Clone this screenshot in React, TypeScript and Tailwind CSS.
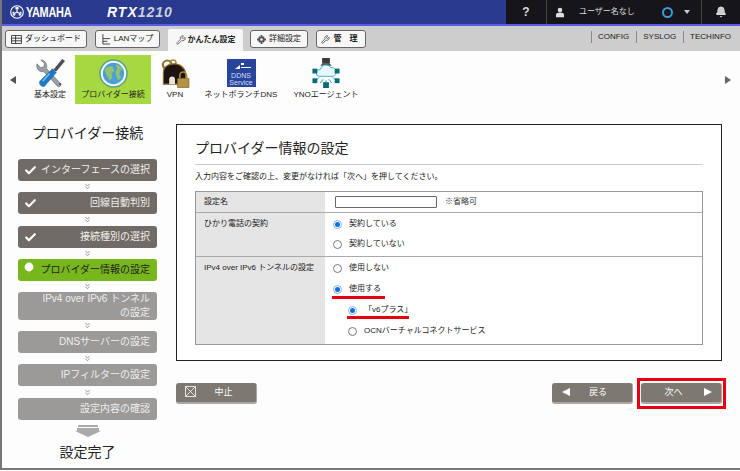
import { Bell, Check, ChevronsDown, Wrench } from "lucide-react";

const font = "[font-family:'Liberation_Sans','Noto_Sans_CJK_JP',sans-serif]";

const steps = [
  { label: "インターフェースの選択", state: "done" },
  { label: "回線自動判別", state: "done" },
  { label: "接続種別の選択", state: "done" },
  { label: "プロバイダー情報の設定", state: "active" },
  { label: "IPv4 over IPv6 トンネル\nの設定", state: "todo" },
  { label: "DNSサーバーの設定", state: "todo" },
  { label: "IPフィルターの設定", state: "todo" },
  { label: "設定内容の確認", state: "todo" },
];

const YamahaMark = () => (
  <svg viewBox="0 0 20 20" className="w-[14px] h-[14px]" fill="none" stroke="white">
    <circle cx="10" cy="10" r="9" strokeWidth="1.6" />
    <g strokeWidth="1.5">
      <path d="M10 10V3M8.5 3v3M11.5 3v3" />
      <path d="M10 10l6 3.5M16.5 11.5l-2.5-1.5M15 15l-2.5-1.5" />
      <path d="M10 10l-6 3.5M3.5 11.5l2.5-1.5M5 15l2.5-1.5" />
    </g>
  </svg>
);

const ToolsIcon = () => (
  <svg viewBox="0 0 30 30" className="w-[29px] h-[29px]">
    <path d="M5 1l4 4-1 3-3 1-4-4c-1 5 2 9 7 8l14 15c2 2 5-1 3-3L11 10c1-5-2-9-6-9z" fill="#9a9fa4" stroke="#5b5f64" strokeWidth="0.6" />
    <circle cx="25" cy="26" r="1.2" fill="#555" />
    <path d="M27 0l3 2-9 11-3-2z" fill="#4b4f55" />
    <path d="M17 10l4 4-12 14c-2 2-7-2-5-5z" fill="#1f78c4" stroke="#145a96" strokeWidth="0.5" />
    <path d="M7 23l7-8" stroke="#7cc0ee" strokeWidth="1.5" />
  </svg>
);

const GlobeIcon = () => (
  <svg viewBox="0 0 30 30" className="w-[29px] h-[29px]">
    <circle cx="15" cy="15" r="14" fill="#eef7f2" stroke="#5fa08c" strokeWidth="1.6" />
    <circle cx="15" cy="15" r="11" fill="#4a9fd6" />
    <path d="M6 11c3-3 6-4 8-3l2 4-3 3 1 5-3 2-3-5zM17 6c3 0 6 2 7 5l-2 1-1 4 2 3-3 3-2-4-1-5 2-3z" fill="#93c272" />
  </svg>
);

const VpnIcon = () => (
  <svg viewBox="0 0 30 30" className="w-[30px] h-[29px]">
    <circle cx="7" cy="6" r="4.5" fill="none" stroke="#8f7430" strokeWidth="2.2" />
    <circle cx="13" cy="4" r="3" fill="none" stroke="#a98c45" strokeWidth="1.6" />
    <path d="M3 26V14C3 8 8 5 14 5c7 0 12 5 12 11v10z" fill="#1c1512" stroke="#8d6f2e" strokeWidth="1.2" />
    <path d="M9 26v-5a3 3 0 016 0v5z" fill="#e9e4d8" />
    <path d="M20 20v-3a3.5 3.5 0 017 0v3" fill="none" stroke="#a98c45" strokeWidth="1.6" />
    <rect x="17.5" y="20" width="12" height="10" rx="1" fill="#b5924a" stroke="#7b6028" strokeWidth="0.6" />
  </svg>
);

const DnsIcon = () => (
  <div className="w-[29px] h-[28px] bg-[#28449c] flex flex-col items-center text-[#d8dff0]">
    <div className="h-[14px] w-full flex items-start pl-[8px] pt-[3px]">
      <svg viewBox="0 0 16 8" className="w-[16px] h-[8px]" fill="white">
        <path d="M0 7l5-4v4zM6 1h3v2H6zM6 5h10v1H6z" />
      </svg>
    </div>
    <span className="text-[7px] leading-[6px]">DDNS</span>
    <span className="text-[7px] leading-[7px]">Service</span>
  </div>
);

const YnoIcon = () => (
  <svg viewBox="0 0 30 31" className="w-[30px] h-[30px]">
    <rect x="11" y="0" width="8" height="6" fill="#3b3b3b" />
    <path d="M9 8l2-2h8l2 2z" fill="#555" />
    <path d="M15 8v3M15 23v3M8 17l-3-3M22 17l3-3M8 20l-3 3M22 20l3 3M12 22l-3 4M18 22l3 4" stroke="#1c8fa8" strokeWidth="0.9" />
    <path d="M8 19a3.5 3.5 0 011-7 6 6 0 0111-2 4.5 4.5 0 012 9z" fill="#e9f7fc" stroke="#3fb3d8" strokeWidth="1" />
    <g fill="#0f6a78">
      <rect x="1" y="11" width="5" height="5" />
      <rect x="24" y="11" width="5" height="5" />
      <rect x="1" y="21" width="5" height="5" />
      <rect x="24" y="21" width="5" height="5" />
      <rect x="12" y="25" width="6" height="6" />
    </g>
  </svg>
);

const navItems = [
  { label: "基本設定", icon: <ToolsIcon />, w: "w-[50px]" },
  { label: "プロバイダー接続", icon: <GlobeIcon />, w: "w-[76px]", active: true },
  { label: "VPN", icon: <VpnIcon />, w: "w-[48px]" },
  { label: "ネットボランチDNS", icon: <DnsIcon />, w: "w-[84px]" },
  { label: "YNOエージェント", icon: <YnoIcon />, w: "w-[86px]" },
];

const Radio = ({ on }: { on?: boolean }) => (
  <span className={`w-[9px] h-[9px] rounded-full border bg-white flex items-center justify-center shrink-0 ${on ? "border-[#8fb4e0]" : "border-[#777]"}`}>
    {on && <span className="w-[5px] h-[5px] rounded-full bg-[#0f6fe8]" />}
  </span>
);

const Option = ({ on, children, className = "" }: { on?: boolean; children: React.ReactNode; className?: string }) => (
  <div className={`flex items-center gap-[7px] h-[12px] ${className}`}>
    <Radio on={on} />
    <span>{children}</span>
  </div>
);

const TabButton = ({ children, className = "" }: { children: React.ReactNode; className?: string }) => (
  <div className={`h-[18px] bg-[#f7f7f7] border border-[#666] rounded-[3px] flex items-center justify-center gap-[3px] text-[8px] text-[#222] ${className}`}>
    {children}
  </div>
);

const ActionButton = ({ children, className = "" }: { children: React.ReactNode; className?: string }) => (
  <div className={`relative w-[81px] h-[21px] bg-[#7d7871] rounded-[3px] border-b-2 border-r border-[#aaa8a2] flex items-center text-[9px] text-white ${className}`}>
    {children}
  </div>
);

export default function App() {
  return (
    <div className={`${font} relative w-[740px] h-[470px] bg-[#fdfdfd] border-l-2 border-b-2 border-[#777] overflow-hidden text-[#222]`}>
      {/* top bar */}
      <header className="-ml-[2px] h-[24px] flex bg-[#2a3a8e]">
        <div className="flex-1 flex items-center pl-[10px]">
          <YamahaMark />
          <span className="ml-[2px] w-[60px] text-[14px] font-bold text-white [transform:scaleX(0.78)] origin-left tracking-tight">YAMAHA</span>
          <span className="ml-[21px] text-[14px] font-bold italic text-white tracking-[1px]">RTX<span className="text-[#c9d0dc]">1210</span></span>
        </div>
        <div className="w-[234px] bg-[#16161a] flex items-center text-[#ddd]">
          <div className="w-[41px] h-full border-r border-[#444] flex items-center justify-center text-[12px] font-bold">?</div>
          <div className="w-[155px] h-full border-r border-[#444] flex items-center pl-[9px] text-[8px]">
            <svg viewBox="0 0 10 12" className="w-[8px] h-[11px]" fill="#ddd">
              <circle cx="5" cy="3" r="2.8" />
              <path d="M0 12V8.5C0 7 2 6 5 6s5 1 5 2.5V12z" />
            </svg>
            <span className="ml-[15px] w-[74px] whitespace-nowrap">ユーザー名なし</span>
            <span className="ml-[9px] w-[11px] h-[11px] rounded-full border-2 border-[#3d9bd6]" />
            <span className="ml-[11px] w-0 h-0 border-l-[3px] border-r-[3px] border-t-[4px] border-l-transparent border-r-transparent border-t-[#ccc]" />
          </div>
          <div className="flex-1 flex items-center justify-center">
            <Bell className="w-[12px] h-[12px]" fill="#ccc" />
          </div>
        </div>
      </header>
      <div className="-ml-[2px] h-[2px] bg-[#5a5ae6]" />

      {/* tabs */}
      <div className="-ml-[2px] h-[25px] bg-[#cdcdcd] flex items-start pl-[5px] pt-[4px]">
        <TabButton className="w-[82px]">
          <svg viewBox="0 0 12 10" className="w-[11px] h-[9px]" fill="none" stroke="#333">
            <path d="M.5.5h11v9H.5zM5 .5v9M5 3.5h6.5M5 6.5h6.5M.5 3.5H5M.5 6.5H5" />
          </svg>
          ダッシュボード
        </TabButton>
        <TabButton className="w-[65px] ml-[8px]">
          <svg viewBox="0 0 10 12" className="w-[9px] h-[11px]" fill="none" stroke="#333">
            <path d="M1 0v11h8M1 5h8M1 8h5" />
          </svg>
          LANマップ
        </TabButton>
        <div className="w-[75px] h-[22px] -mt-[1px] ml-[8px] bg-[#f7f7f7] rounded-t-[2px] flex items-center justify-center gap-[2px] text-[8px] font-bold">
          <Wrench className="w-[10px] h-[10px] text-[#555]" />
          かんたん設定
        </div>
        <TabButton className="w-[58px] ml-[7px]">
          <svg viewBox="0 0 10 10" className="w-[9px] h-[9px]" fill="#555">
            <circle cx="5" cy="5" r="3.4" />
            <path d="M4 0h2v10H4zM0 4h10v2H0zM1.5 2.9l1.4-1.4 5.6 5.6-1.4 1.4zM7.1 1.5l1.4 1.4-5.6 5.6-1.4-1.4z" />
            <circle cx="5" cy="5" r="1.4" fill="#f7f7f7" />
          </svg>
          詳細設定
        </TabButton>
        <TabButton className="w-[50px] ml-[8px] font-bold">
          <Wrench className="w-[9px] h-[9px] text-[#444]" />
          <span className="tracking-[3px]">管 理</span>
        </TabButton>
        <div className="ml-auto mr-[9px] mt-[1px] h-[12px] flex items-center text-[8px]">
          <span className="pl-[6px] border-l border-[#888] pr-[7px]">CONFIG</span>
          <span className="pl-[6px] border-l border-[#888] pr-[7px]">SYSLOG</span>
          <span className="pl-[6px] border-l border-[#888]">TECHINFO</span>
        </div>
      </div>

      {/* icon nav */}
      <nav className="h-[55px] flex items-start pt-[4px] text-[8px]">
        <span className="ml-[8px] mt-[21px] w-0 h-0 border-y-[4px] border-r-[6px] border-y-transparent border-r-[#555]" />
        <div className="ml-[9px] flex">
          {navItems.map((n) => (
            <div key={n.label} className={`${n.w} h-[49px] flex flex-col items-center justify-start pt-[3px] ${n.active ? "bg-[#a6d840]" : ""}`}>
              <div className="h-[30px] flex items-center">{n.icon}</div>
              <span className="mt-[1px] whitespace-nowrap">{n.label}</span>
            </div>
          ))}
        </div>
        <span className="ml-auto mr-[9px] mt-[21px] w-0 h-0 border-y-[4px] border-l-[6px] border-y-transparent border-l-[#666]" />
      </nav>

      {/* body */}
      <div className="flex items-start">
        <aside className="w-[139px] ml-[16px] shrink-0">
          <h1 className="h-[53px] pt-[17px] text-[14px] leading-[20px] text-center whitespace-nowrap">プロバイダー接続</h1>
          <div className="flex flex-col items-stretch">
            {steps.map((s, i) => (
              <div key={s.label}>
                {i > 0 && (
                  <div className="h-[11.33px] flex items-center justify-center">
                    <ChevronsDown className="w-[9px] h-[9px] text-[#777]" />
                  </div>
                )}
                <div
                  className={`relative rounded-[3px] px-[7px] flex items-center justify-end text-[10px] leading-[14px] text-right whitespace-pre-line ${
                    s.label.includes("\n") ? "h-[27.5px]" : "h-[22px]"
                  } ${s.state === "done" ? "bg-[#706b67] text-[#f0eee9]" : s.state === "active" ? "bg-[#78b61e] text-[#222]" : "bg-[#9b9a98] text-[#eeeeee]"}`}
                >
                  {s.state === "done" && <Check className="absolute left-[6px] top-[5px] w-[13px] h-[13px] text-white" strokeWidth={4} />}
                  {s.state === "active" && (
                    <svg viewBox="0 0 10 14" className="absolute left-[6px] top-[3px] w-[10px] h-[14px]">
                      <path d="M4 8h2l-1 5z" fill="#caa15a" />
                      <circle cx="5" cy="5" r="4.4" fill="#fff" />
                    </svg>
                  )}
                  {s.label}
                </div>
              </div>
            ))}
          </div>
          <div className="h-[17px] flex flex-col items-center justify-end">
            <div className="w-[20px] h-[2px] bg-[#aaa] mb-[1px]" />
            <div className="w-[22px] h-[3px] bg-[#aaa]" />
            <div className="w-0 h-0 border-x-[13px] border-t-[6px] border-x-transparent border-t-[#aaa]" />
          </div>
          <div className="mt-[5px] text-[14px] leading-[20px] text-center">設定完了</div>
        </aside>

        <main className="ml-[19px] w-[546px] pt-[18px]">
          <section className="h-[237px] bg-white border border-[#222] px-[18px] pt-[13px]">
            <h2 className="h-[27px] text-[14px] leading-[20px] border-b border-[#ccc]">プロバイダー情報の設定</h2>
            <p className="mt-[6px] h-[20px] text-[8px] leading-[12px]">入力内容をご確認の上、変更がなければ「次へ」を押してください。</p>
            <div className="border border-[#999] text-[8px] leading-[12px]">
              <div className="flex h-[21px] border-b border-[#aaa]">
                <div className="w-[129px] bg-[#e5e5e5] pl-[8px] pt-[4px]">設定名</div>
                <div className="flex-1 flex items-center pl-[10px]">
                  <div className="w-[102px] h-[12px] bg-white border border-[#666] rounded-[1px]" />
                  <span className="ml-[8px] text-[#333]">※省略可</span>
                </div>
              </div>
              <div className="flex h-[44px] border-b border-[#aaa]">
                <div className="w-[129px] bg-[#e5e5e5] pl-[8px] pt-[5px]">ひかり電話の契約</div>
                <div className="flex-1 pl-[8px] pt-[5px] flex flex-col gap-[8px]">
                  <Option on>契約している</Option>
                  <Option>契約していない</Option>
                </div>
              </div>
              <div className="flex h-[87px]">
                <div className="w-[129px] bg-[#e5e5e5] pl-[8px] pt-[5px] whitespace-nowrap">IPv4 over IPv6 トンネルの設定</div>
                <div className="relative flex-1 pl-[8px] pt-[5px] flex flex-col gap-[9px]">
                  <Option>使用しない</Option>
                  <Option on>使用する</Option>
                  <Option on className="ml-[15px]">「v6プラス」</Option>
                  <Option className="ml-[15px]">OCNバーチャルコネクトサービス</Option>
                  <div className="absolute left-[7px] top-[39px] w-[53px] h-[3px] bg-[#e60012]" />
                  <div className="absolute left-[22px] top-[59px] w-[62px] h-[3px] bg-[#e60012]" />
                </div>
              </div>
            </div>
          </section>

          <div className="mt-[22px] flex items-center">
            <ActionButton>
              <svg viewBox="0 0 11 11" className="absolute left-[9px] top-[3px] w-[11px] h-[11px]" fill="none" stroke="white" strokeWidth="0.8">
                <path d="M.5.5h10v10H.5zM.5.5l10 10M10.5.5l-10 10" />
              </svg>
              <span className="w-full pl-[15px] text-center">中止</span>
            </ActionButton>
            <ActionButton className="ml-auto">
              <span className="absolute left-[10px] top-[5px] w-0 h-0 border-y-[4px] border-r-[8px] border-y-transparent border-r-white" />
              <span className="w-full pl-[12px] text-center">戻る</span>
            </ActionButton>
            <div className="relative ml-[8px]">
              <ActionButton>
                <span className="w-full pr-[15px] text-center">次へ</span>
                <span className="absolute right-[9px] top-[5px] w-0 h-0 border-y-[4px] border-l-[8px] border-y-transparent border-l-white" />
              </ActionButton>
              <div className="absolute -left-[4px] -top-[5px] w-[89px] h-[31px] border-[3px] border-[#e60012]" />
            </div>
          </div>
        </main>
      </div>
    </div>
  );
}
